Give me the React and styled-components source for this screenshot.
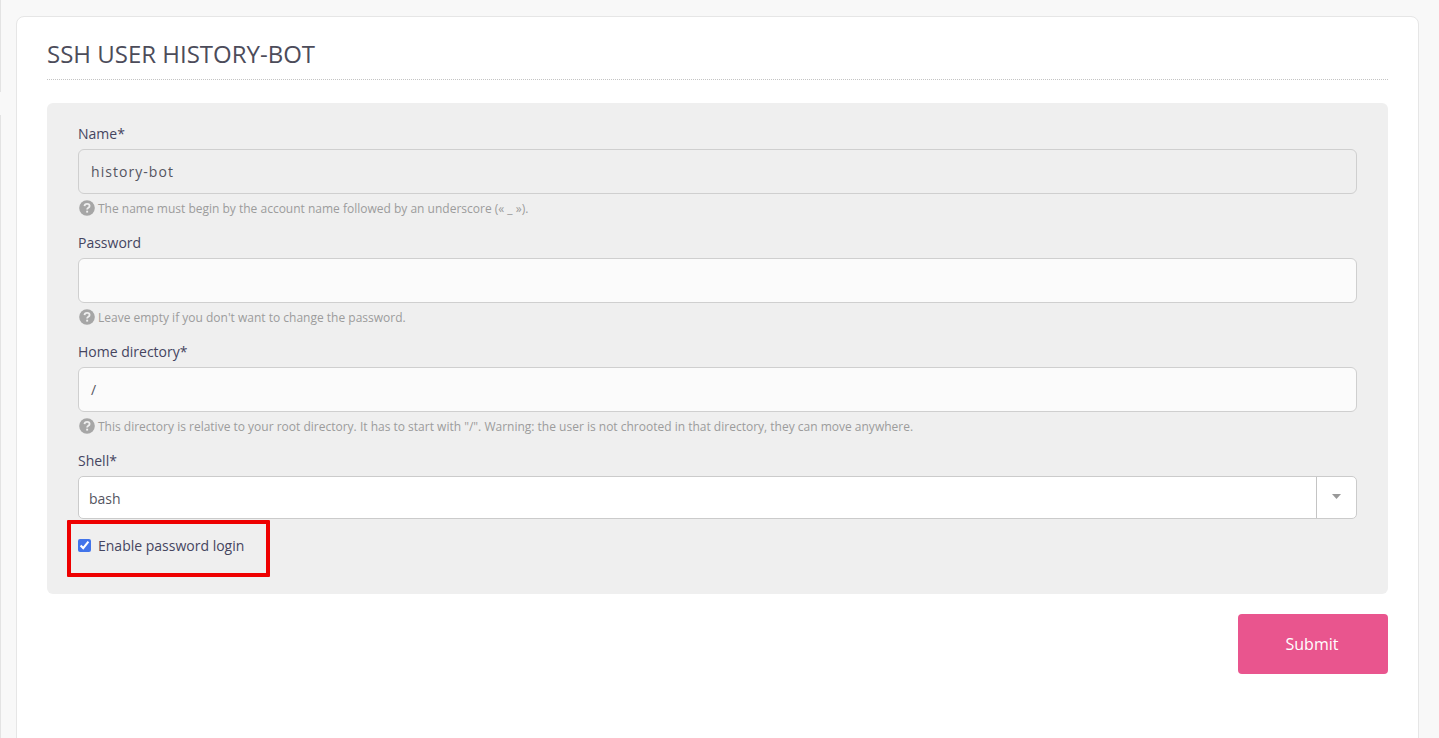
import React from "react";
import styled, { createGlobalStyle } from "styled-components";

const Global = createGlobalStyle`
  html, body { margin: 0; padding: 0; height: 738px; overflow: hidden; background: #f8f8f8; }
  * { box-sizing: border-box; }
`;

const Page = styled.div`
  display: flex;
  height: 738px;
  overflow: hidden;
  font-family: "Open Sans", sans-serif;
  color: #45455f;
`;

const Rail = styled.div`
  width: 1px;
  margin-right: 15px;
  flex: none;
  display: flex;
  flex-direction: column;
  gap: 23px;
`;

const RailPiece = styled.div`
  height: ${(p) => p.$h}px;
  background: #e3e3e3;
`;

const Card = styled.main`
  width: 1403px;
  height: 760px;
  flex: none;
  margin-top: 16px;
  padding: 21px 30px 0 30px;
  background: #fff;
  border: 1px solid #e6e6e6;
  border-radius: 8px;
`;

const Title = styled.h1`
  margin: 0 0 23px;
  height: 42px;
  padding: 0;
  font-size: 24px;
  line-height: 31px;
  font-weight: 400;
  color: #4c4c5a;
  border-bottom: 1px dotted #c4c4c4;
`;

const Panel = styled.section`
  padding: 20px 31px 15px;
  height: 491px;
  background: #efefef;
  border-radius: 6px;
`;

const Field = styled.div`
  height: 109px;
`;

const Label = styled.label`
  display: block;
  height: 26px;
  font-size: 14px;
  line-height: 21px;
  color: #45455f;
`;

const Input = styled.div`
  height: 45px;
  padding: 0 12px;
  display: flex;
  align-items: center;
  font-size: 14px;
  letter-spacing: ${(p) => (p.$disabled ? "1.05px" : "0")};
  color: #55555f;
  background: ${(p) => (p.$disabled ? "#efefef" : "#fbfbfb")};
  border: 1px solid #cfcfcf;
  border-radius: 6px;
`;

const Help = styled.div`
  display: flex;
  align-items: center;
  gap: 3px;
  height: 22px;
  margin-top: 3px;
  padding-left: 1px;
  font-size: 12px;
  color: #9c9c9c;
`;

const Select = styled.div`
  display: flex;
  height: 43px;
  background: #fff;
  border: 1px solid #cbcbcb;
  border-radius: 5px;
`;

const SelectValue = styled.div`
  flex: 1;
  display: flex;
  align-items: center;
  padding: 1px 0 0 10px;
  font-size: 14px;
  color: #55555f;
`;

const Caret = styled.div`
  width: 40px;
  display: flex;
  align-items: center;
  justify-content: center;
  padding-bottom: 2px;
  border-left: 1px solid #c4c4c4;
`;

const CheckRow = styled.div`
  position: relative;
  display: flex;
  align-items: center;
  gap: 7px;
  margin-top: 16px;
  height: 20px;
  font-size: 14px;
  color: #45455f;
`;

const Check = styled.input`
  appearance: auto;
  width: 13px;
  height: 13px;
  margin: 0;
  accent-color: #4274ea;
`;

const Highlight = styled.div`
  position: absolute;
  left: -11px;
  top: -15px;
  width: 203px;
  height: 57px;
  border: 4px solid #ee0000;
  border-radius: 1px;
  pointer-events: none;
`;

const Actions = styled.div`
  display: flex;
  justify-content: flex-end;
  margin-top: 20px;
`;

const Submit = styled.button`
  width: 150px;
  height: 60px;
  padding: 0 2px 0 0;
  font-family: inherit;
  font-size: 16px;
  color: #fff;
  background: #e9558e;
  border: 0;
  border-radius: 4px;
`;

const HelpIcon = () => (
  <svg width="16" height="16" viewBox="0 0 16 16" aria-hidden="true">
    <circle cx="8" cy="8" r="7.8" fill="#a6a6a6" />
    <path d="M5.5 6.1c.1-1.6 1.1-2.3 2.6-2.3s2.5.9 2.5 2.1c0 2-2.5 1.8-2.5 3.7" fill="none" stroke="#efefef" strokeWidth="1.8" />
    <rect x="7.2" y="10.7" width="1.9" height="1.9" fill="#efefef" />
  </svg>
);

const fields = [
  { label: "Name*", value: "history-bot", disabled: true, help: "The name must begin by the account name followed by an underscore (« _ »)." },
  { label: "Password", value: "", help: "Leave empty if you don't want to change the password." },
  { label: "Home directory*", value: "/", help: 'This directory is relative to your root directory. It has to start with "/". Warning: the user is not chrooted in that directory, they can move anywhere.' },
];

export default function App() {
  return (
    <Page>
      <Global />
      <Rail>
        <RailPiece $h={92} />
        <RailPiece $h={623} />
      </Rail>
      <Card>
        <Title>SSH USER HISTORY-BOT</Title>
        <Panel>
          {fields.map((f) => (
            <Field key={f.label}>
              <Label>{f.label}</Label>
              <Input $disabled={f.disabled}>{f.value}</Input>
              <Help><HelpIcon />{f.help}</Help>
            </Field>
          ))}
          <Label>Shell*</Label>
          <Select>
            <SelectValue>bash</SelectValue>
            <Caret>
              <svg width="9" height="5" viewBox="0 0 9 5" aria-hidden="true">
                <path d="M0 0h9L4.5 5z" fill="#999" />
              </svg>
            </Caret>
          </Select>
          <CheckRow>
            <Check type="checkbox" defaultChecked />
            Enable password login
            <Highlight />
          </CheckRow>
        </Panel>
        <Actions>
          <Submit>Submit</Submit>
        </Actions>
      </Card>
    </Page>
  );
}
